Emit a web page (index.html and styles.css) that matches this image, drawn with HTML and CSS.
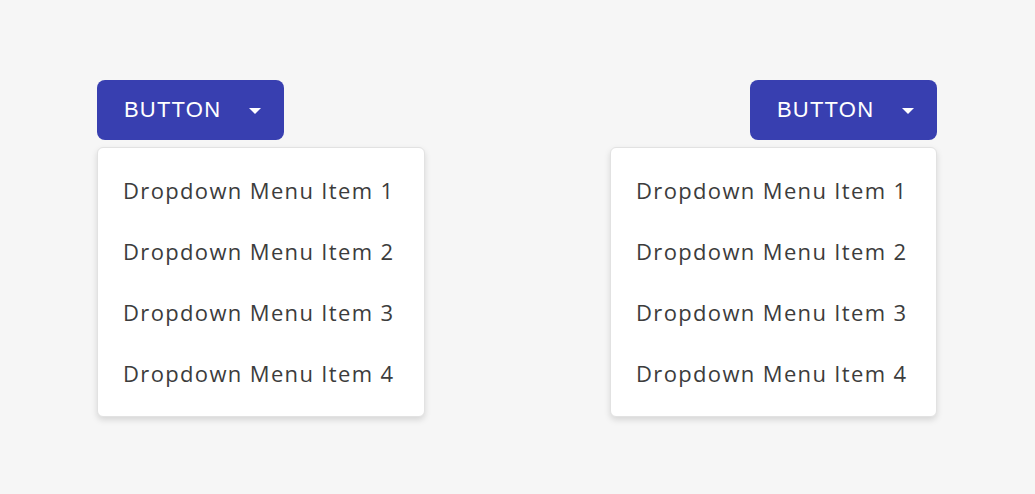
FILE: index.html
```html
<!DOCTYPE html>
<html lang="en">
<head>
<meta charset="utf-8">
<title>Dropdowns</title>
<link rel="stylesheet" href="styles.css">
</head>
<body>
<div class="stage">
  <div class="dropdown dropdown-left">
    <button class="btn" type="button">
      <span class="btn-label">BUTTON</span>
      <svg class="caret" width="12" height="6" viewBox="0 0 12 6"><path d="M0 0 H12 L6 6 Z" fill="#ffffff"/></svg>
    </button>
    <ul class="menu">
      <li class="menu-item">Dropdown Menu Item 1</li>
      <li class="menu-item">Dropdown Menu Item 2</li>
      <li class="menu-item">Dropdown Menu Item 3</li>
      <li class="menu-item">Dropdown Menu Item 4</li>
    </ul>
  </div>
  <div class="dropdown dropdown-right">
    <button class="btn" type="button">
      <span class="btn-label">BUTTON</span>
      <svg class="caret" width="12" height="6" viewBox="0 0 12 6"><path d="M0 0 H12 L6 6 Z" fill="#ffffff"/></svg>
    </button>
    <ul class="menu">
      <li class="menu-item">Dropdown Menu Item 1</li>
      <li class="menu-item">Dropdown Menu Item 2</li>
      <li class="menu-item">Dropdown Menu Item 3</li>
      <li class="menu-item">Dropdown Menu Item 4</li>
    </ul>
  </div>
</div>
</body>
</html>
```
FILE: styles.css
```css
html, body {
  margin: 0;
  padding: 0;
}
body {
  background: #f6f6f6;
  width: 1035px;
  height: 494px;
  overflow: hidden;
}
.stage {
  display: flex;
  justify-content: space-between;
  align-items: flex-start;
  padding: 80px 98px 0 97px;
}
.dropdown {
  display: flex;
  flex-direction: column;
  gap: 7px;
}
.dropdown-left {
  align-items: flex-start;
}
.dropdown-right {
  align-items: flex-end;
}
.btn {
  display: flex;
  align-items: center;
  width: 187px;
  height: 60px;
  box-sizing: border-box;
  padding: 0 23px 0 27px;
  border: 0;
  border-radius: 8px;
  background: #383fb0;
  color: #ffffff;
  font-family: "Liberation Sans", Arial, sans-serif;
  font-size: 22px;
  letter-spacing: 1.2px;
  cursor: pointer;
}
.btn-label {
  flex: 1;
  text-align: left;
  line-height: 1;
  padding-top: 0;
}
.caret {
  display: block;
  flex: none;
  margin-top: 1px;
}
.menu {
  list-style: none;
  margin: 0;
  padding: 11px 0 13px;
  width: 328px;
  box-sizing: border-box;
  background: #ffffff;
  border: 1px solid #e2e2e2;
  border-radius: 6px;
  box-shadow: 0 3px 6px rgba(0, 0, 0, 0.13);
}
.menu-item {
  height: 61px;
  display: flex;
  align-items: center;
  padding-left: 25px;
  font-family: "Open Sans", sans-serif;
  font-size: 22px;
  letter-spacing: 1.35px;
  color: #3c3c3c;
}
.dropdown-right .menu {
  width: 327px;
}
```
